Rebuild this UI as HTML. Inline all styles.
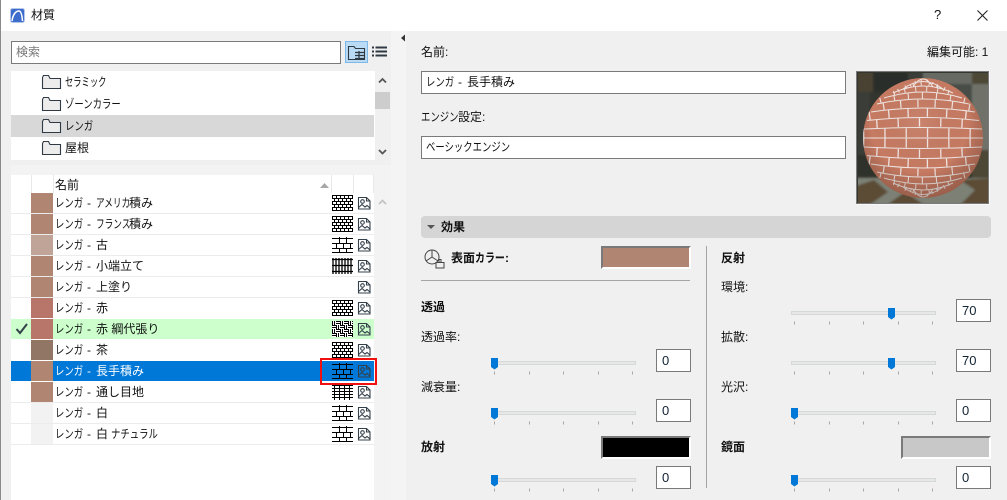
<!DOCTYPE html>
<html lang="ja"><head><meta charset="utf-8"><title>材質</title>
<style>
html,body{margin:0;padding:0}
body{width:1007px;height:500px;position:relative;overflow:hidden;background:#f0f0f0;font:12px/16px "Liberation Sans","Noto Sans CJK JP",sans-serif;color:#111}
div{position:absolute;box-sizing:border-box}
.t{white-space:nowrap;height:16px}
.k{display:inline-block;white-space:nowrap;transform-origin:0 50%;transform:scaleX(.78);vertical-align:top}
.k3{width:27px}.k4{width:36px}.k6{width:54px}.k9{width:81px}.k5{width:45px}
.a{width:33px;transform:scaleX(.72)}
.c{width:40px;transform:scaleX(.69)}
.d{margin:0 5px}
.b{font-weight:700}
.i{background:#fff;border:1px solid #7a7a7a;padding:0 0 0 4px;line-height:21px;white-space:nowrap}
.i .k{line-height:21px}
.n{padding-left:5px;color:#123;font-size:13px}
.r{left:11px;width:363px;height:20px;border:0}
.s{left:31px;width:22px;height:20px}
svg{position:absolute;left:0;top:0}
</style></head><body>
<div style="left:0;top:0;width:1007px;height:31px;background:#fff"></div>
<div style="left:0;top:0;width:1px;height:500px;background:#8a8a8a"></div>
<div class="t" style="left:31px;top:7px;font-size:12px">材質</div>
<div class="t" style="left:934px;top:7px;font-size:13px">?</div>

<div style="left:391px;top:31px;width:15px;height:469px;background:#f4f4f4"></div>
<div style="left:11px;top:165px;width:380px;height:335px;background:#f3f3f3"></div>

<div class="i" style="left:11px;top:41px;width:330px;height:23px;color:#777">検索</div>
<div style="left:345px;top:41px;width:23px;height:22px;background:#b9dbf5;border:1px solid #7fb8e6"></div>

<div style="left:11px;top:71px;width:364px;height:89px;background:#fff"></div>
<div style="left:11px;top:115px;width:363px;height:22px;background:#d8d8d8"></div>
<div style="left:375px;top:92px;width:15px;height:17px;background:#cdcdcd"></div>
<div class="t" style="left:65px;top:74px"><span class="k c">セラミック</span></div>
<div class="t" style="left:65px;top:96px"><span class="k k6">ゾーンカラー</span></div>
<div class="t" style="left:65px;top:118px"><span class="k k3">レンガ</span></div>
<div class="t" style="left:65px;top:140px">屋根</div>

<div style="left:11px;top:175px;width:363px;height:325px;background:#fff"></div>
<div style="left:31px;top:175px;width:1px;height:18px;background:#e8e8e8"></div>
<div style="left:53px;top:175px;width:1px;height:18px;background:#e8e8e8"></div>
<div style="left:331px;top:175px;width:1px;height:18px;background:#e8e8e8"></div>
<div style="left:353px;top:175px;width:1px;height:18px;background:#e8e8e8"></div>
<div style="left:373px;top:175px;width:1px;height:18px;background:#e8e8e8"></div>
<div class="t" style="left:55px;top:177px">名前</div>

<div class="r" style="top:213px;height:1px;background:#ececec"></div>
<div class="r" style="top:234px;height:1px;background:#ececec"></div>
<div class="r" style="top:255px;height:1px;background:#ececec"></div>
<div class="r" style="top:276px;height:1px;background:#ececec"></div>
<div class="r" style="top:297px;height:1px;background:#ececec"></div>
<div class="r" style="top:402px;height:1px;background:#ececec"></div>
<div class="r" style="top:423px;height:1px;background:#ececec"></div>
<div class="r" style="top:444px;height:1px;background:#ececec"></div>
<div class="r" style="top:319px;background:#ccffcc"></div>
<div class="r" style="top:361px;background:#0078d7"></div>

<div class="s" style="top:193px;background:#b08572"></div>
<div class="s" style="top:214px;background:#b08572"></div>
<div class="s" style="top:235px;background:#c0a498"></div>
<div class="s" style="top:256px;background:#b08572"></div>
<div class="s" style="top:277px;background:#b08572"></div>
<div class="s" style="top:298px;background:#b8766a"></div>
<div class="s" style="top:319px;background:#b8766a"></div>
<div class="s" style="top:340px;background:#917666"></div>
<div class="s" style="top:361px;background:#b08572"></div>
<div class="s" style="top:382px;background:#b08572"></div>
<div class="s" style="top:403px;background:#f2f2f2"></div>
<div class="s" style="top:424px;background:#f2f2f2"></div>

<div class="t" style="left:55px;top:195px"><span class="k k3">レンガ</span><span class="d">-</span><span class="k a">アメリカ</span>積み</div>
<div class="t" style="left:55px;top:216px"><span class="k k3">レンガ</span><span class="d">-</span><span class="k a">フランス</span>積み</div>
<div class="t" style="left:55px;top:237px"><span class="k k3">レンガ</span><span class="d">-</span>古</div>
<div class="t" style="left:55px;top:258px"><span class="k k3">レンガ</span><span class="d">-</span>小端立て</div>
<div class="t" style="left:55px;top:279px"><span class="k k3">レンガ</span><span class="d">-</span>上塗り</div>
<div class="t" style="left:55px;top:300px"><span class="k k3">レンガ</span><span class="d">-</span>赤</div>
<div class="t" style="left:55px;top:321px"><span class="k k3">レンガ</span><span class="d">-</span>赤 綱代張り</div>
<div class="t" style="left:55px;top:342px"><span class="k k3">レンガ</span><span class="d">-</span>茶</div>
<div class="t" style="left:55px;top:363px;color:#fff"><span class="k k3">レンガ</span><span class="d">-</span>長手積み</div>
<div class="t" style="left:55px;top:384px"><span class="k k3">レンガ</span><span class="d">-</span>通し目地</div>
<div class="t" style="left:55px;top:405px"><span class="k k3">レンガ</span><span class="d">-</span>白</div>
<div class="t" style="left:55px;top:426px"><span class="k k3">レンガ</span><span class="d">-</span>白 <span class="k k5">ナチュラル</span></div>

<div class="t" style="left:421px;top:44px">名前:</div>
<div class="t" style="left:927px;top:44px">編集可能: 1</div>
<div class="i" style="left:421px;top:71px;width:425px;height:23px"><span class="k k3">レンガ</span><span class="d">-</span>長手積み</div>
<div class="t" style="left:421px;top:109px"><span class="k" style="width:37px">エンジン</span>設定:</div>
<div class="i" style="left:421px;top:136px;width:425px;height:23px"><span class="k k9">ベーシックエンジン</span></div>
<div style="left:421px;top:216px;width:570px;height:22px;background:#d5d5d5;border-radius:4px"></div>
<div class="t b" style="left:441px;top:219px">効果</div>
<div class="t b" style="left:451px;top:250px"><span>表面</span><span class="k" style="width:30px;transform:scaleX(.83)">カラー</span>:</div>
<div style="left:601px;top:246px;width:90px;height:23px;background:#b08572;border:2px solid #7a7a7a;border-right-color:#fff;border-bottom-color:#fff"></div>
<div style="left:421px;top:280px;width:269px;height:1px;background:#a5a5a5"></div>
<div class="t b" style="left:421px;top:299px">透過</div>
<div class="t" style="left:421px;top:329px">透過率:</div>
<div class="t" style="left:421px;top:379px">減衰量:</div>
<div class="t b" style="left:421px;top:439px">放射</div>
<div style="left:601px;top:436px;width:90px;height:23px;background:#000;border:2px solid #7a7a7a;border-right-color:#fff;border-bottom-color:#fff"></div>
<div class="i n" style="left:656px;top:349px;width:35px;height:23px">0</div>
<div class="i n" style="left:656px;top:399px;width:35px;height:23px">0</div>
<div class="i n" style="left:656px;top:466px;width:35px;height:23px">0</div>

<div style="left:706px;top:246px;width:1px;height:242px;background:#a5a5a5"></div>
<div class="t b" style="left:721px;top:250px">反射</div>
<div class="t" style="left:721px;top:279px">環境:</div>
<div class="t" style="left:721px;top:329px">拡散:</div>
<div class="t" style="left:721px;top:379px">光沢:</div>
<div class="t b" style="left:721px;top:439px">鏡面</div>
<div style="left:901px;top:436px;width:90px;height:23px;background:#c8c8c8;border:2px solid #7a7a7a;border-right-color:#fff;border-bottom-color:#fff"></div>
<div class="i n" style="left:956px;top:299px;width:35px;height:23px">70</div>
<div class="i n" style="left:956px;top:349px;width:35px;height:23px">70</div>
<div class="i n" style="left:956px;top:399px;width:35px;height:23px">0</div>
<div class="i n" style="left:956px;top:466px;width:35px;height:23px">0</div>

<svg width="1007" height="500" viewBox="0 0 1007 500">
<defs>
<pattern id="p3" width=".142857" height=".375"><rect width="3" height="6" fill="#fff"/><path d="M1 0V6M0 1.500H3" stroke="#000" stroke-width="1.300" fill="none"/></pattern>
<pattern id="p4" width=".380952" height=".5"><rect width="8" height="8" fill="#fff"/><path d="M.5 0V4M2.500 0V4M4 .5H8M4 2.500H8M0 4.500H4M0 6.500H4M4.500 4V8M6.500 4V8" stroke="#000" fill="none"/></pattern>
<pattern id="p5" width=".238095" height=".2"><rect width="5" height="3" fill="#fff"/><path d="M0 .5H5M2.500 0V3" stroke="#000" fill="none"/></pattern>
<g id="db" fill="none" stroke="#000"><path d="M0 .5H21M0 3.500H21M0 6.500H21M0 9.500H21M0 12.500H21M0 15.500H21"/><path d="M0 2H21M0 8H21M0 14H21" stroke-width="2" stroke-dasharray="1 3"/><path d="M0 5H21M0 11H21" stroke-width="2" stroke-dasharray="1 3" stroke-dashoffset="2"/></g>
<g id="lb" fill="none" stroke="#000"><path d="M0 1.500H21M0 6.500H21M0 11.500H21M0 15.500H21M7.500 0V6M14.500 0V6M4.500 6V12M11.500 6V12M18.500 6V12M7.500 12V16M14.500 12V16"/></g>
<g id="img" fill="none" stroke="#34404a" stroke-width="1.100"><path d="M.5.5H8.500L12 4V12H.5ZM8.500.5V4H12"/><circle cx="4.500" cy="4.500" r="1.800"/><path d="M.5 10.500L4 7.500 7 10 9 8.500 12 11"/></g>
<g id="fd"><path d="M.5 2.500V13.500H18.500V3.500H8L6.500 .5H1.500Z" fill="#ececec" stroke="#2f3a44" stroke-width="1.100"/></g>
<g id="sl"><rect x=".5" y=".5" width="144" height="3" fill="#e7e7e7" stroke="#d4d8d6"/><path d="M3.500 10.500v3M38.500 10.500v3M72.500 10.500v3M107.500 10.500v3M141.500 10.500v3" stroke="#a8a8a8"/></g>
<path id="th" d="M0 0H7V9L3.500 11.500 0 9Z" fill="#0078d7"/>
<filter id="bl"><feGaussianBlur stdDeviation=".3"/></filter>
<filter id="bl2"><feGaussianBlur stdDeviation="1"/></filter>
<radialGradient id="sg" cx=".47" cy=".38" r=".62"><stop offset="0" stop-color="#fff" stop-opacity=".08"/><stop offset=".65" stop-color="#000" stop-opacity="0"/><stop offset="1" stop-color="#2a1a10" stop-opacity=".28"/></radialGradient>
<clipPath id="sc"><circle cx="923" cy="138" r="60"/></clipPath>
<g id="hemi" fill="none">
<g stroke="#f0e6e2">
<path d="M913 87Q923 71 933 87M903 89Q923 74 943 89M893 93Q923 79 953 93M884 98Q923 86 962 98M877 104Q923 94 969 104M871 112Q923 104 975 112M867 120.500Q923 114.500 979 120.500M864 129Q923 126 982 129M863 138H983"/>
</g>
<g stroke="#f0e6e2">
<path d="M863 133.500Q923 132 983 133.500" stroke-width="9" stroke-dasharray="1.300 20"/>
<path d="M865 124.700Q923 120 981 124.700" stroke-width="8.500" stroke-dasharray="1.300 20" stroke-dashoffset="10"/>
<path d="M869 116Q923 109 977 116" stroke-width="8.500" stroke-dasharray="1.300 18"/>
<path d="M874 108Q923 99 972 108" stroke-width="7.500" stroke-dasharray="1.200 16" stroke-dashoffset="8"/>
<path d="M880 101Q923 90 966 101" stroke-width="6" stroke-dasharray="1.100 13"/>
<path d="M888 95.500Q923 82.500 958 95.500" stroke-width="5" stroke-dasharray="1 10" stroke-dashoffset="5"/>
<path d="M898 91Q923 76.500 948 91" stroke-width="4" stroke-dasharray="1 7"/>
<path d="M908 88Q923 72.500 938 88" stroke-width="2.500" stroke-dasharray="1 5" stroke-dashoffset="3"/>
</g></g>
</defs>

<!-- logo -->
<rect x="10.500" y="8.500" width="14" height="14" rx="2" fill="#3c6ccc" stroke="#b4c6ea"/><path d="M12 21C13 14 16 11 19 11 21 11 22 15 22.500 21" fill="none" stroke="#fff" stroke-width="1.500"/>
<path d="M977.500 10.500L987.500 20.500M987.500 10.500L977.500 20.500" stroke="#222" stroke-width="1.100"/>
<!-- view toggles -->
<path d="M348.500 46.500H354L355.500 48.500H364.500V59.500H348.500Z" fill="none" stroke="#2f3a44" stroke-width="1.100"/>
<path d="M355 52.500H365M355 55.500H365M355 58.500H365M359 51V60" stroke="#2f3a44" stroke-width="1.300"/>
<path d="M372 47.500H374M375.500 47.500H387M372 51.500H374M375.500 51.500H387M372 55.500H374M375.500 55.500H387" stroke="#2f3a44" stroke-width="2"/>
<!-- folders -->
<use href="#fd" x="42" y="75"/><use href="#fd" x="42" y="97"/><use href="#fd" x="42" y="119"/><use href="#fd" x="42" y="141"/>
<!-- chevrons -->
<path d="M379 82.500L382.500 79 386 82.500M379 150L382.500 153.500 386 150" fill="none" stroke="#555" stroke-width="1.800"/>
<path d="M379 204L382.500 200.500 386 204" fill="none" stroke="#c4c4c4" stroke-width="1.800"/>
<path d="M320 188L324.500 183 329 188Z" fill="#a8a8a8"/>
<path d="M401 38L405 34.500V41.500Z" fill="#333"/>
<path d="M427 225H435L431 229Z" fill="#555"/>
<!-- check -->
<path d="M16.500 329L20 333 27 324" fill="none" stroke="#34404a" stroke-width="2"/>
<!-- hatches -->
<use href="#db" x="332" y="195"/>
<use href="#db" x="332" y="216"/>
<use href="#lb" x="332" y="237"/>
<rect x="332" y="258" width="21" height="16" fill="url(#p3)"/>
<use href="#db" x="332" y="300"/>
<rect x="332" y="321" width="21" height="16" fill="url(#p4)"/>
<use href="#db" x="332" y="342"/>
<use href="#lb" x="332" y="363"/>
<rect x="332" y="385" width="21" height="15" fill="url(#p5)"/>
<use href="#lb" x="332" y="405"/>
<use href="#lb" x="332" y="426"/>
<!-- image icons -->
<use href="#img" x="358" y="197"/><use href="#img" x="358" y="218"/><use href="#img" x="358" y="239"/><use href="#img" x="358" y="260"/><use href="#img" x="358" y="281"/><use href="#img" x="358" y="302"/><use href="#img" x="358" y="323"/><use href="#img" x="358" y="344"/><use href="#img" x="358" y="365"/><use href="#img" x="358" y="386"/><use href="#img" x="358" y="407"/><use href="#img" x="358" y="428"/>
<!-- red box -->
<rect x="321" y="359" width="55" height="25" fill="none" stroke="#f01010" stroke-width="2"/>
<!-- surface icon -->
<circle cx="432" cy="257" r="7" fill="none" stroke="#444"/><path d="M432 250V257L426 261M432 257L438 261" fill="none" stroke="#444"/>
<path d="M436 262.500H444V268H436ZM439 262.500V259.500H441V262.500" fill="#f0f0f0" stroke="#444"/>
<!-- sliders -->
<use href="#sl" x="491" y="361"/><use href="#th" x="491" y="358"/>
<use href="#sl" x="491" y="411"/><use href="#th" x="491" y="408"/>
<use href="#sl" x="491" y="478"/><use href="#th" x="491" y="475"/>
<use href="#sl" x="791" y="311"/><use href="#th" x="888" y="308"/>
<use href="#sl" x="791" y="361"/><use href="#th" x="888" y="358"/>
<use href="#sl" x="791" y="411"/><use href="#th" x="791" y="408"/>
<use href="#sl" x="791" y="478"/><use href="#th" x="791" y="475"/>
<!-- preview -->
<rect x="856.500" y="71.500" width="133" height="133" fill="#fff"/>
<rect x="856.500" y="71.500" width="132" height="132" fill="#33362f" stroke="#7a7a7a"/>
<svg x="858" y="73" width="130" height="130" viewBox="858 73 130 130">
<g filter="url(#bl2)">
<path d="M850 65H873V92H850Z" fill="#494232"/>
<path d="M873 65H908V92H873Z" fill="#2a2d29"/>
<path d="M908 65H923V92H908Z" fill="#3b3e38"/>
<path d="M923 65H972V84H923Z" fill="#666a62"/>
<path d="M972 65H995V84H972Z" fill="#4e4636"/>
<path d="M923 84H972V150H923Z" fill="#4a4d47"/>
<path d="M850 92H870V155H850Z" fill="#3b3e38"/>
<path d="M972 84H995V150H972Z" fill="#6f726a"/>
<path d="M972 150H995V180H972Z" fill="#4e4636"/>
<path d="M850 155H880V178H850Z" fill="#2d302c"/>
<path d="M850 178H995V210H850Z" fill="#7c8075"/>
<path d="M850 188L874 180 888 192 862 210H850ZM880 210L905 192 932 210ZM955 210L975 190 960 180 995 178V210Z" fill="#5c4b35"/>
</g></svg>
<circle cx="923" cy="138" r="60" fill="#c67a62"/>
<g clip-path="url(#sc)"><g filter="url(#bl)"><use href="#hemi"/><use href="#hemi" transform="matrix(1 0 0 -1 0 276)"/></g></g>
<circle cx="923" cy="138" r="60" fill="url(#sg)"/>
</svg>
</body></html>
